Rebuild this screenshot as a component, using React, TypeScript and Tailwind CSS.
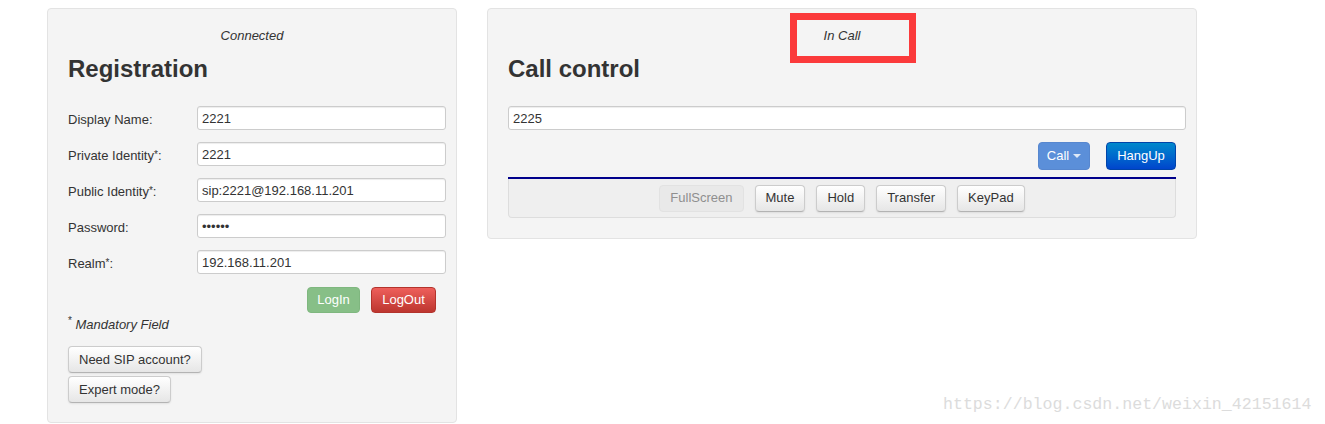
import React from 'react';

const font = { fontFamily: '"Liberation Sans", Arial, sans-serif' };

function Field({ label, value, required }: { label: string; value: string; required?: boolean }) {
  return (
    <div className="flex items-center h-6">
      <label className="w-[129px] mt-[3px] text-[13px] text-[#333]">
        {label}
        {required && <sup className="text-[10px] relative -top-[2px]">*</sup>}:
      </label>
      <input
        readOnly
        value={value}
        className="w-[249px] h-6 px-[4px] bg-white border border-[#cccccc] rounded-[3px] text-[13px] text-[#333] shadow-[inset_0_1px_1px_rgba(0,0,0,0.075)] outline-none"
      />
    </div>
  );
}

const btn =
  'h-[27px] px-[10px] rounded-[4px] border border-[#cccccc] border-b-[#b3b3b3] bg-gradient-to-b from-white to-[#e6e6e6] text-[13px] text-[#333] shadow-[0_1px_2px_rgba(0,0,0,0.08)]';

export default function App() {
  return (
    <div className="relative w-[1325px] h-[424px] bg-white overflow-hidden" style={font}>
      <div className="flex items-start gap-[30px] pl-[47px] pt-[8px]">
        {/* Registration */}
        <div className="w-[410px] h-[415px] bg-[#f4f4f4] border border-[#e3e3e3] rounded-[4px] pl-[20px] pr-[9px] pt-[18px] flex flex-col">
          <div className="text-center italic text-[13px] leading-[18px] text-[#333] pr-[11px]">Connected</div>
          <h1 className="mt-[10px] text-[24px] leading-[28px] font-bold text-[#333]">Registration</h1>
          <div className="mt-[23px] flex flex-col gap-[12px]">
            <Field label="Display Name" value="2221" />
            <Field label="Private Identity" value="2221" required />
            <Field label="Public Identity" value="sip:2221@192.168.11.201" required />
            <Field label="Password" value="••••••" />
            <Field label="Realm" value="192.168.11.201" required />
          </div>
          <div className="mt-[13px] flex justify-end gap-[11px] pr-[11px]">
            <button className="h-[26px] w-[53px] rounded-[4px] bg-[#87bf87] border border-[#7fb77f] text-white text-[13px]">
              LogIn
            </button>
            <button className="h-[26px] w-[65px] rounded-[4px] bg-gradient-to-b from-[#ee5f5b] to-[#bd362f] border border-[#b3332c] text-white text-[13px]">
              LogOut
            </button>
          </div>
          <div className="mt-[3px] text-[13px] leading-[18px] text-[#333]">
            <sup className="text-[10px]">*</sup> <span className="italic">Mandatory Field</span>
          </div>
          <div className="mt-[12px] flex flex-col items-start gap-[3px]">
            <button className={btn}>Need SIP account?</button>
            <button className={btn}>Expert mode?</button>
          </div>
        </div>

        {/* Call control */}
        <div className="relative w-[710px] h-[231px] bg-[#f4f4f4] border border-[#e3e3e3] rounded-[4px] pl-[20px] pr-[9px] pt-[18px] flex flex-col">
          <div className="text-center italic text-[13px] leading-[18px] text-[#333] pr-[11px]">In Call</div>
          <h1 className="mt-[10px] text-[24px] leading-[28px] font-bold text-[#333]">Call control</h1>
          <input
            readOnly
            value="2225"
            className="mt-[23px] w-[678px] h-6 px-[4px] bg-white border border-[#cccccc] rounded-[3px] text-[13px] text-[#333] shadow-[inset_0_1px_1px_rgba(0,0,0,0.075)] outline-none"
          />
          <div className="mt-[12px] mr-[11px] flex justify-end gap-[16px]">
            <button className="h-[28px] w-[52px] rounded-[4px] bg-[#5b8fd9] border border-[#5787cf] text-white text-[13px] flex items-center justify-center gap-[4px]">
              Call
              <span className="w-0 h-0 border-l-[4px] border-r-[4px] border-t-[4px] border-l-transparent border-r-transparent border-t-white/80" />
            </button>
            <button className="h-[28px] w-[70px] rounded-[4px] bg-gradient-to-b from-[#0088cc] to-[#0044cc] border border-[#0044aa] text-white text-[13px]">
              HangUp
            </button>
          </div>
          <div className="mt-[7px] mr-[11px] border-t-2 border-[#00008b]">
            <div className="h-[39px] bg-[#efefef] border border-t-0 border-[#dddddd] rounded-b-[4px] flex items-center justify-center gap-[11px]">
              <button className="h-[27px] px-[10px] rounded-[4px] border border-[#e2e2e2] bg-[#e9e9e9] text-[13px] text-[#8f8f8f]">
                FullScreen
              </button>
              <button className={btn}>Mute</button>
              <button className={btn}>Hold</button>
              <button className={btn}>Transfer</button>
              <button className={btn}>KeyPad</button>
            </div>
          </div>
          {/* highlight annotation */}
          <div className="absolute left-[302px] top-[4px] w-[126px] h-[50px] border-[7px] border-[#fb3a3b]" />
        </div>
      </div>
      <div
        className="absolute left-[943px] top-[393px] text-[16.6px] text-[#dcdcdc]"
        style={{ fontFamily: '"Liberation Mono", monospace' }}
      >
        https://blog.csdn.net/weixin_42151614
      </div>
    </div>
  );
}
